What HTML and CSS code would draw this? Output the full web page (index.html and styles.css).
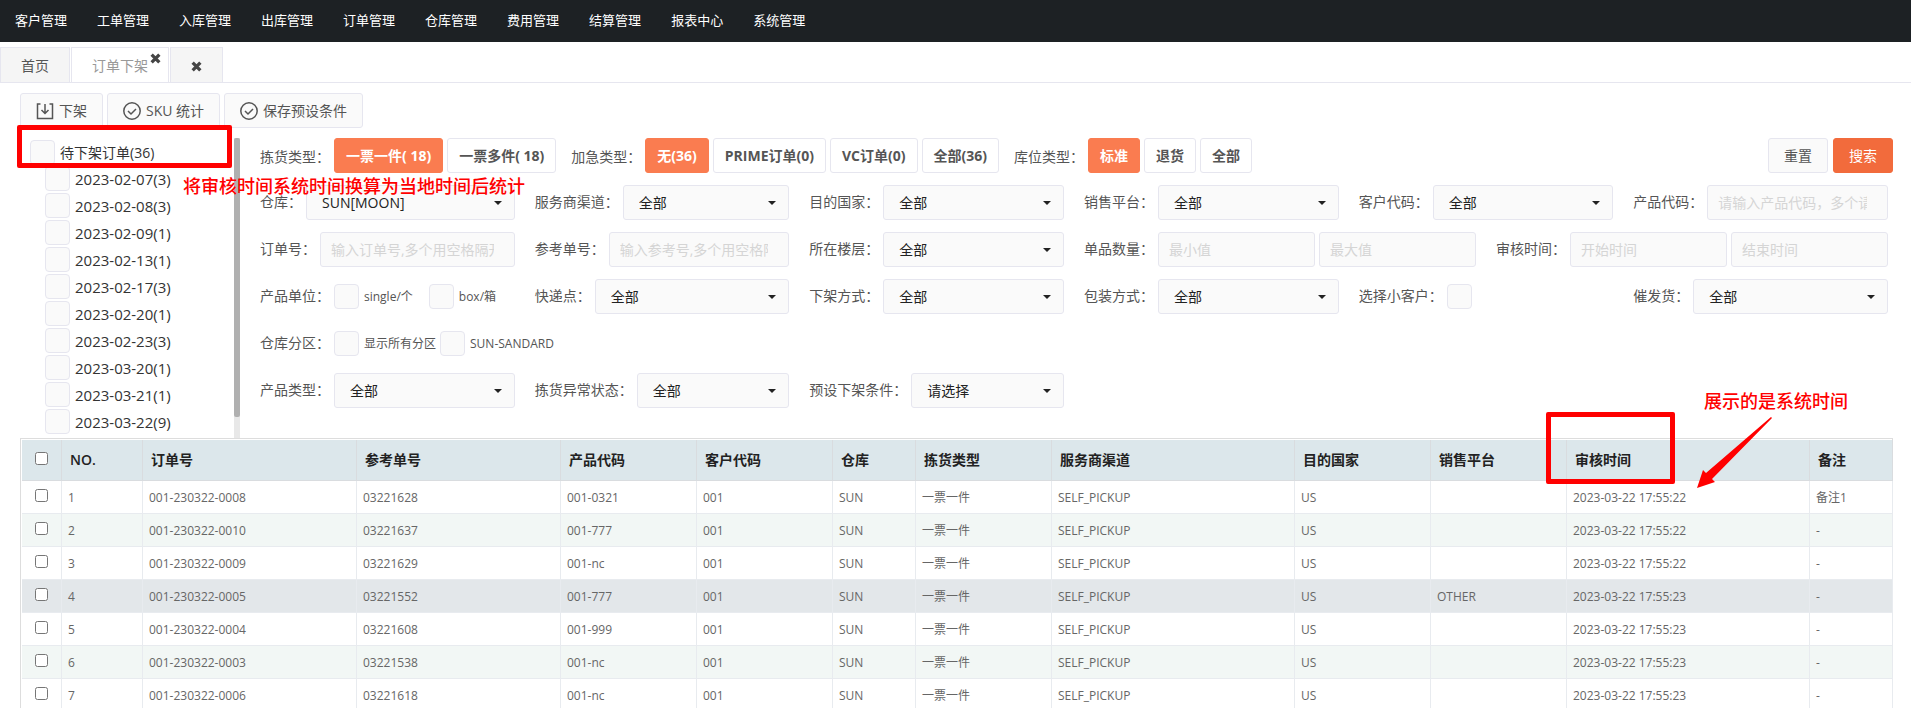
FILE: index.html
```html
<!DOCTYPE html>
<html lang="zh-CN">
<head>
  <meta charset="UTF-8" />
  <meta name="viewport" content="width=device-width, initial-scale=1.0"/>
  <title>订单下架</title>
  <link rel="stylesheet" href="styles.css">
</head>
<body>
  <!-- Main navigation -->
  <nav class="navbar">
    <a href="#">客户管理</a>
    <a href="#">工单管理</a>
    <a href="#">入库管理</a>
    <a href="#">出库管理</a>
    <a href="#">订单管理</a>
    <a href="#">仓库管理</a>
    <a href="#">费用管理</a>
    <a href="#">结算管理</a>
    <a href="#">报表中心</a>
    <a href="#">系统管理</a>
  </nav>

  <!-- Open tabs -->
  <div class="tabs">
    <a href="#" class="tab">首页</a>
    <a href="#" class="tab tab-active">订单下架
      <svg class="tab-close tab-close-corner" viewBox="0 0 10 10"><path d="M1.5 1.5l7 7M8.5 1.5l-7 7"/></svg>
    </a>
    <a href="#" class="tab" aria-label="关闭">
      <svg class="tab-close" viewBox="0 0 10 10"><path d="M1.5 1.5l7 7M8.5 1.5l-7 7"/></svg>
    </a>
  </div>

  <main class="page">
    <!-- Toolbar -->
    <div class="toolbar">
      <button type="button" class="btn">
        <svg class="icon" viewBox="0 0 18 18"><path d="M4.5 2H1.5v14.5h15V2h-3M9 2v9.5M5.5 8L9 11.500L12.500 8"/></svg>下架
      </button>
      <button type="button" class="btn">
        <svg class="icon" viewBox="0 0 18 18"><circle cx="9" cy="9" r="8.2"/><path d="M5 9l3 3 5-5"/></svg>SKU 统计
      </button>
      <button type="button" class="btn">
        <svg class="icon" viewBox="0 0 18 18"><circle cx="9" cy="9" r="8.2"/><path d="M5 9l3 3 5-5"/></svg>保存预设条件
      </button>
    </div>

    <div class="content">
      <!-- Order tree -->
      <aside class="tree">
        <div class="tree-list">
          <label class="tree-root"><input type="checkbox" class="check">待下架订单(36)</label>
          <label class="tree-item"><input type="checkbox" class="check">2023-02-07(3)</label>
          <label class="tree-item"><input type="checkbox" class="check">2023-02-08(3)</label>
          <label class="tree-item"><input type="checkbox" class="check">2023-02-09(1)</label>
          <label class="tree-item"><input type="checkbox" class="check">2023-02-13(1)</label>
          <label class="tree-item"><input type="checkbox" class="check">2023-02-17(3)</label>
          <label class="tree-item"><input type="checkbox" class="check">2023-02-20(1)</label>
          <label class="tree-item"><input type="checkbox" class="check">2023-02-23(3)</label>
          <label class="tree-item"><input type="checkbox" class="check">2023-03-20(1)</label>
          <label class="tree-item"><input type="checkbox" class="check">2023-03-21(1)</label>
          <label class="tree-item"><input type="checkbox" class="check">2023-03-22(9)</label>
        </div>
        <div class="scrollbar"><div class="scrollbar-thumb"></div></div>
      </aside>

      <!-- Filters -->
      <form class="filters">
        <div class="quick">
          <div class="quick-group">
            <span class="quick-label">拣货类型：</span>
            <button type="button" class="pill pill-on">一票一件( 18)</button>
            <button type="button" class="pill">一票多件( 18)</button>
          </div>
          <div class="quick-group">
            <span class="quick-label">加急类型：</span>
            <button type="button" class="pill pill-on">无(36)</button>
            <button type="button" class="pill">PRIME订单(0)</button>
            <button type="button" class="pill">VC订单(0)</button>
            <button type="button" class="pill">全部(36)</button>
          </div>
          <div class="quick-group">
            <span class="quick-label">库位类型：</span>
            <button type="button" class="pill pill-on">标准</button>
            <button type="button" class="pill">退货</button>
            <button type="button" class="pill">全部</button>
          </div>
          <div class="quick-actions">
            <button type="reset" class="btn">重置</button>
            <button type="submit" class="btn btn-primary">搜索</button>
          </div>
        </div>

        <div class="grid">
          <div class="field">
            <label class="label" for="warehouse">仓库：</label>
            <select id="warehouse" class="control"><option>SUN[MOON]</option></select>
          </div>
          <div class="field">
            <label class="label" for="channel">服务商渠道：</label>
            <select id="channel" class="control"><option>全部</option></select>
          </div>
          <div class="field">
            <label class="label" for="country">目的国家：</label>
            <select id="country" class="control"><option>全部</option></select>
          </div>
          <div class="field">
            <label class="label" for="platform">销售平台：</label>
            <select id="platform" class="control"><option>全部</option></select>
          </div>
          <div class="field">
            <label class="label" for="customer">客户代码：</label>
            <select id="customer" class="control"><option>全部</option></select>
          </div>
          <div class="field">
            <label class="label" for="product">产品代码：</label>
            <input type="text" id="product" class="control" placeholder="请输入产品代码，多个请用空格隔开">
          </div>

          <div class="field">
            <label class="label" for="orderNo">订单号：</label>
            <input type="text" id="orderNo" class="control" placeholder="输入订单号,多个用空格隔开">
          </div>
          <div class="field">
            <label class="label" for="refNo">参考单号：</label>
            <input type="text" id="refNo" class="control" placeholder="输入参考号,多个用空格隔开">
          </div>
          <div class="field">
            <label class="label" for="floor">所在楼层：</label>
            <select id="floor" class="control"><option>全部</option></select>
          </div>
          <div class="field field-wide">
            <label class="label" for="qtyMin">单品数量：</label>
            <input type="text" id="qtyMin" class="control" placeholder="最小值">
            <input type="text" id="qtyMax" class="control" placeholder="最大值" aria-label="最大值">
          </div>
          <div class="field field-wide">
            <label class="label" for="timeStart">审核时间：</label>
            <input type="text" id="timeStart" class="control" placeholder="开始时间">
            <input type="text" id="timeEnd" class="control" placeholder="结束时间" aria-label="结束时间">
          </div>

          <div class="field">
            <span class="label">产品单位：</span>
            <label class="option option-unit"><input type="checkbox" class="check">single/个</label>
            <label class="option"><input type="checkbox" class="check">box/箱</label>
          </div>
          <div class="field">
            <label class="label" for="express">快递点：</label>
            <select id="express" class="control"><option>全部</option></select>
          </div>
          <div class="field">
            <label class="label" for="method">下架方式：</label>
            <select id="method" class="control"><option>全部</option></select>
          </div>
          <div class="field">
            <label class="label" for="packing">包装方式：</label>
            <select id="packing" class="control"><option>全部</option></select>
          </div>
          <div class="field">
            <label class="label" for="smallCustomer">选择小客户：</label>
            <input type="checkbox" id="smallCustomer" class="check">
          </div>
          <div class="field">
            <label class="label" for="urge">催发货：</label>
            <select id="urge" class="control"><option>全部</option></select>
          </div>

          <div class="field field-full">
            <span class="label">仓库分区：</span>
            <label class="option"><input type="checkbox" class="check">显示所有分区</label>
            <label class="option"><input type="checkbox" class="check">SUN-SANDARD</label>
          </div>

          <div class="field">
            <label class="label" for="productType">产品类型：</label>
            <select id="productType" class="control"><option>全部</option></select>
          </div>
          <div class="field">
            <label class="label" for="pickStatus">拣货异常状态：</label>
            <select id="pickStatus" class="control"><option>全部</option></select>
          </div>
          <div class="field">
            <label class="label" for="preset">预设下架条件：</label>
            <select id="preset" class="control"><option>请选择</option></select>
          </div>
        </div>
      </form>
    </div>

    <!-- Order list -->
    <div class="table-wrap">
      <table class="orders">
        <colgroup>
          <col class="w-check"><col class="w-no"><col class="w-order"><col class="w-ref">
          <col class="w-mid"><col class="w-mid"><col class="w-small"><col class="w-mid">
          <col class="w-wide"><col class="w-mid"><col class="w-mid"><col class="w-wide"><col class="w-small">
        </colgroup>
        <thead>
          <tr>
            <th><input type="checkbox" aria-label="全选"></th>
            <th>NO.</th><th>订单号</th><th>参考单号</th><th>产品代码</th><th>客户代码</th><th>仓库</th>
            <th>拣货类型</th><th>服务商渠道</th><th>目的国家</th><th>销售平台</th><th>审核时间</th><th>备注</th>
          </tr>
        </thead>
        <tbody>
          <tr>
            <td><input type="checkbox" aria-label="1"></td><td>1</td><td>001-230322-0008</td><td>03221628</td><td>001-0321</td><td>001</td><td>SUN</td>
            <td>一票一件</td><td>SELF_PICKUP</td><td>US</td><td></td><td>2023-03-22 17:55:22</td><td>备注1</td>
          </tr>
          <tr>
            <td><input type="checkbox" aria-label="2"></td><td>2</td><td>001-230322-0010</td><td>03221637</td><td>001-777</td><td>001</td><td>SUN</td>
            <td>一票一件</td><td>SELF_PICKUP</td><td>US</td><td></td><td>2023-03-22 17:55:22</td><td>-</td>
          </tr>
          <tr>
            <td><input type="checkbox" aria-label="3"></td><td>3</td><td>001-230322-0009</td><td>03221629</td><td>001-nc</td><td>001</td><td>SUN</td>
            <td>一票一件</td><td>SELF_PICKUP</td><td>US</td><td></td><td>2023-03-22 17:55:22</td><td>-</td>
          </tr>
          <tr class="row-hover">
            <td><input type="checkbox" aria-label="4"></td><td>4</td><td>001-230322-0005</td><td>03221552</td><td>001-777</td><td>001</td><td>SUN</td>
            <td>一票一件</td><td>SELF_PICKUP</td><td>US</td><td>OTHER</td><td>2023-03-22 17:55:23</td><td>-</td>
          </tr>
          <tr>
            <td><input type="checkbox" aria-label="5"></td><td>5</td><td>001-230322-0004</td><td>03221608</td><td>001-999</td><td>001</td><td>SUN</td>
            <td>一票一件</td><td>SELF_PICKUP</td><td>US</td><td></td><td>2023-03-22 17:55:23</td><td>-</td>
          </tr>
          <tr>
            <td><input type="checkbox" aria-label="6"></td><td>6</td><td>001-230322-0003</td><td>03221538</td><td>001-nc</td><td>001</td><td>SUN</td>
            <td>一票一件</td><td>SELF_PICKUP</td><td>US</td><td></td><td>2023-03-22 17:55:23</td><td>-</td>
          </tr>
          <tr>
            <td><input type="checkbox" aria-label="7"></td><td>7</td><td>001-230322-0006</td><td>03221618</td><td>001-nc</td><td>001</td><td>SUN</td>
            <td>一票一件</td><td>SELF_PICKUP</td><td>US</td><td></td><td>2023-03-22 17:55:23</td><td>-</td>
          </tr>
        </tbody>
      </table>
    </div>
  </main>

  <!-- Red notes over the page -->
  <div class="mark mark-tree"></div>
  <div class="note note-tree">将审核时间系统时间换算为当地时间后统计</div>
  <div class="mark mark-time"></div>
  <div class="note note-time">展示的是系统时间</div>
  <svg class="arrow" viewBox="0 0 76 73"><path d="M74 1L9 57l-3-3L0 72l18-6-3-3L75 2z"/></svg>
</body>
</html>
```

FILE: styles.css
```css
:root {
  --border: #e6e6ef;
  --control-bg: #fafafa;
  --text: #555;
  --text-dark: #333;
  --orange: #fa7c50;
  --orange-dark: #f26b3c;
  --red: #ff0000;
}

* {
  box-sizing: border-box;
}

body {
  position: relative;
  margin: 0;
  height: 100vh;
  overflow: hidden;
  background: #fff;
  color: var(--text);
  font-family: "Open Sans", "Noto Sans CJK SC", sans-serif;
  font-size: 14px;
  line-height: 20px;
}

a {
  color: inherit;
  text-decoration: none;
}

button, input, select {
  font: inherit;
  color: inherit;
}

/* Navigation */
.navbar {
  display: flex;
  height: 42px;
  background: #1d2124;
  color: #fff;
  font-size: 13px;
}

.navbar a {
  padding: 10px 15px;
}

/* Tabs */
.tabs {
  display: flex;
  gap: 1px;
  margin-top: 5px;
  height: 36px;
  border-bottom: 1px solid var(--border);
}

.tab {
  position: relative;
  display: flex;
  align-items: center;
  padding: 2px 20px 0;
  border: 1px solid var(--border);
  border-bottom: 0;
  background: #f5f5f5;
}

.tab-active {
  background: #fff;
  color: #999;
}

.tab-close {
  width: 11px;
  height: 11px;
  fill: none;
  stroke: #444;
  stroke-width: 3;
}

.tab-close-corner {
  position: absolute;
  top: 5px;
  right: 7px;
}

.page {
  padding: 10px 18px 0 20px;
}

/* Buttons */
.toolbar {
  display: flex;
  gap: 4px;
}

.btn {
  display: flex;
  align-items: center;
  gap: 5px;
  height: 35px;
  padding: 0 15px;
  border: 1px solid var(--border);
  border-radius: 3px;
  background: var(--control-bg);
}

.btn-primary {
  border-color: var(--orange-dark);
  background: var(--orange-dark);
  color: #fff;
}

.icon {
  width: 18px;
  height: 18px;
  fill: none;
  stroke: #555;
  stroke-width: 1.5;
}

.content {
  display: flex;
  gap: 20px;
  height: 300px;
  margin-top: 10px;
}

/* Tree */
.tree {
  display: flex;
  justify-content: space-between;
  width: 220px;
  flex: none;
}

.tree-list {
  color: var(--text-dark);
}

.tree-root, .tree-item {
  display: flex;
  align-items: center;
  gap: 5px;
  height: 27px;
}

.tree-root {
  padding-top: 2px;
  margin-left: 10px;
}

.tree-item {
  margin-left: 25px;
  font-size: 15px;
}

.scrollbar {
  width: 6px;
  background: #e8e8e8;
}

.scrollbar-thumb {
  height: 93%;
  border-radius: 2px;
  background: #b0b0b0;
}

.check {
  appearance: none;
  flex: none;
  width: 25px;
  height: 25px;
  margin: 0;
  border: 1px solid var(--border);
  border-radius: 4px;
  background: var(--control-bg);
}

/* Filters */
.filters {
  flex: 1;
}

.quick {
  display: flex;
  gap: 15px;
}

.quick-group {
  display: flex;
  align-items: center;
  gap: 4px;
}

.quick-label {
  padding-top: 2px;
}

.quick-actions {
  display: flex;
  gap: 5px;
  margin-left: auto;
}

.pill {
  height: 35px;
  padding: 0 11px;
  border: 1px solid var(--border);
  border-radius: 3px;
  background: #fff;
  font-weight: 700;
}

.pill-on {
  border-color: var(--orange);
  background: var(--orange);
  color: #fff;
}

.grid {
  display: grid;
  grid-template-columns: repeat(12, 1fr);
  grid-auto-rows: 35px;
  gap: 12px 20px;
  margin: 12px 5px 0 0;
}

.field {
  display: flex;
  grid-column: span 2;
  align-items: center;
  gap: 4px;
  min-width: 0;
}

.field-wide {
  grid-column: span 3;
}

.field-full {
  grid-column: 1 / -1;
}

.label {
  flex: none;
  padding-bottom: 2px;
}

.control {
  flex: 1;
  min-width: 0;
  height: 35px;
  padding: 0 20px 0 10px;
  border: 1px solid var(--border);
  border-radius: 3px;
  background: var(--control-bg);
}

select.control {
  appearance: none;
  padding-left: 15px;
  background: var(--control-bg) url("data:image/svg+xml,%3Csvg xmlns='http://www.w3.org/2000/svg' width='8' height='4'%3E%3Cpath d='M0 0h8L4 4z' fill='%23222'/%3E%3C/svg%3E") no-repeat right 12px center;
  color: #222;
}

.control::placeholder {
  color: #d5d5d5;
}

.option {
  display: flex;
  align-items: center;
  gap: 5px;
  font-size: 12px;
}

.option-unit {
  margin-right: 12px;
}

/* Orders table */
.table-wrap {
  padding: 1px 0 0 1px;
  border: 1px solid #ddd;
  border-bottom: 0;
}

.orders {
  width: 100%;
  table-layout: fixed;
  border-collapse: separate;
  border-spacing: 0;
  color: #666;
  font-size: 12px;
}

.w-check { width: 40px; }
.w-no { width: 81px; }
.w-order { width: 214px; }
.w-ref { width: 204px; }
.w-mid { width: 136px; }
.w-small { width: 83px; }
.w-wide { width: 243px; }

.orders th {
  height: 41px;
  padding: 0 8px;
  border-right: 1px solid #d9dcdf;
  border-bottom: 1px solid #d9dcdf;
  background: #dce7eb;
  color: #222;
  font-size: 14px;
  font-weight: 600;
  text-align: left;
}

.orders td {
  height: 33px;
  padding: 2px 6px 0;
  border-right: 1px solid #e8ebef;
  border-bottom: 1px solid #e8ebef;
}

.orders tbody tr:nth-child(even) {
  background: #f2f7f5;
}

.orders tbody tr.row-hover {
  background: #e3e7ea;
}

.orders th:first-child, .orders td:first-child {
  padding: 0;
  text-align: center;
}

.orders input {
  display: block;
  margin: 0 auto 3px;
}

/* Notes */
.mark, .note, .arrow {
  position: absolute;
}

.mark {
  border: 5px solid var(--red);
  border-radius: 2px;
}

.mark-tree {
  left: 17px;
  top: 125px;
  width: 215px;
  height: 43px;
}

.mark-time {
  left: 1546px;
  top: 412px;
  width: 129px;
  height: 72px;
}

.note {
  color: var(--red);
  font-size: 18px;
  font-weight: 500;
  line-height: 24px;
}

.note-tree {
  left: 183px;
  top: 174px;
}

.note-time {
  left: 1704px;
  top: 389px;
}

.arrow {
  left: 1697px;
  top: 416px;
  width: 76px;
  height: 73px;
  fill: var(--red);
}
```
